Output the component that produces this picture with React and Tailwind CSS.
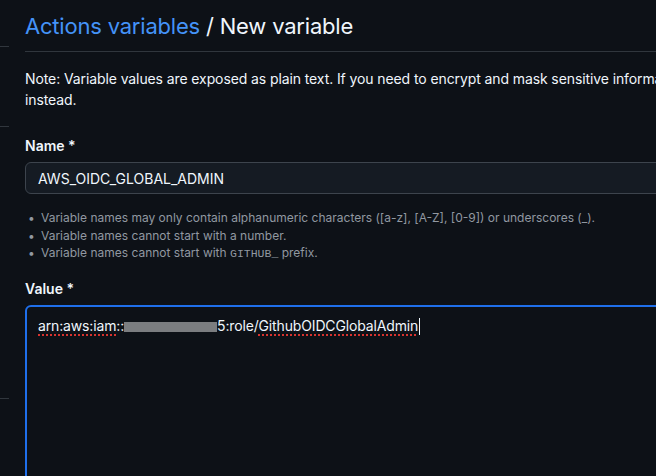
export default function App() {
  const rules = [
    <>Variable names may only contain alphanumeric characters ([a-z], [A-Z], [0-9]) or underscores (_).</>,
    <>Variable names cannot start with a number.</>,
    <>
      Variable names cannot start with{" "}
      <code className="font-['Liberation_Mono',monospace] text-[11.5px]">GITHUB_</code> prefix.
    </>,
  ];

  return (
    <div className="flex w-[656px] h-[476px] overflow-hidden bg-[#0d1117] text-[#f0f6fc] font-['Inter','Liberation_Sans',sans-serif]">
      {/* sidebar edge */}
      <div className="w-[9px] shrink-0">
        <div className="mt-[46px] h-px bg-[#30363d]" />
        <div className="mt-[79px] h-px bg-[#30363d]" />
        <div className="mt-[271px] h-px bg-[#30363d]" />
      </div>

      {/* main */}
      <div className="ml-4 w-[900px] shrink-0">
        <div className="pt-2 pb-[7px] border-b border-[#30363d]">
          <h2 className="text-[22px] leading-[36px] font-normal tracking-[-0.2px]">
            <span className="text-[#4493f8]">Actions variables</span> / New variable
          </h2>
        </div>

        <p className="mt-4 text-[14px] leading-[21px] tracking-[-0.1px] w-[810px]">
          Note: Variable values are exposed as plain text. If you need to encrypt and mask sensitive information, create a secret
          instead.
        </p>

        <label className="block mt-[25px] text-[14px] leading-[21px] font-semibold">Name *</label>
        <div className="mt-[6px] h-8 flex items-center px-3 rounded-md border border-[#3d444d] bg-[#151b23] text-[14px]">
          AWS_OIDC_GLOBAL_ADMIN
        </div>

        <ul className="mt-[15px] text-[12px] leading-[17.5px] text-[#9198a1]">
          {rules.map((r, i) => (
            <li key={i} className="flex">
              <span className="w-4 pl-[3px]">•</span>
              <span>{r}</span>
            </li>
          ))}
        </ul>

        <label className="block mt-[15px] text-[14px] leading-[21px] font-semibold">Value *</label>
        <div className="mt-[6px] h-[260px] rounded-md border-2 border-[#1f6feb] bg-[#0d1117] pl-[11px] pt-2 text-[14px] leading-[21px] tracking-[-0.15px]">
          <span className="underline decoration-dotted decoration-[#d6332f] decoration-2 underline-offset-[4px]">arn:aws:iam</span>
          ::
          <span className="inline-block align-middle w-[93px] h-[10px] bg-[#7b7d80] blur-[0.6px]" />
          5:role/
          <span className="underline decoration-dotted decoration-[#d6332f] decoration-2 underline-offset-[4px]">GithubOIDCGlobalAdmin</span>
          <span className="inline-block align-middle ml-px w-px h-[17px] bg-[#f0f6fc]" />
        </div>
      </div>
    </div>
  );
}
